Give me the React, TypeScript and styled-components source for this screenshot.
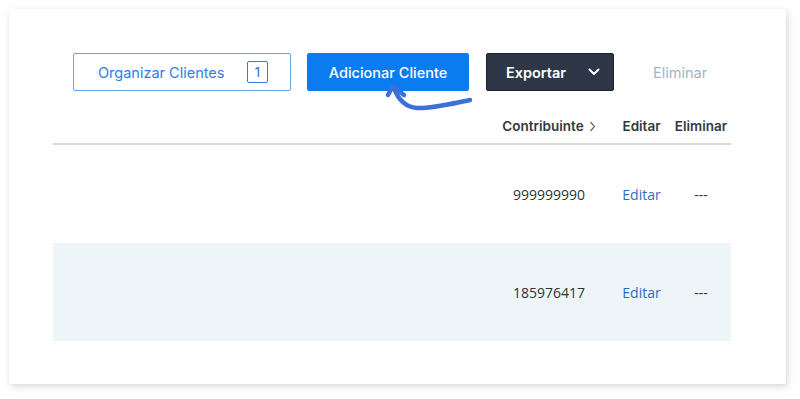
import React from "react";
import styled, { createGlobalStyle } from "styled-components";

const Global = createGlobalStyle`
  html, body { margin: 0; padding: 0; background: #ffffff; }
  body { font-family: "Inter", "Noto Sans", sans-serif; }
  * { box-sizing: border-box; }
`;

const Page = styled.div`
  padding: 9px 14px 15px 9px;
  width: 800px;
  height: 399px;
`;

const Card = styled.div`
  position: relative;
  width: 777px;
  height: 375px;
  background: #ffffff;
  box-shadow: 2px 3px 7px rgba(40, 50, 80, 0.16), 0 0 3px rgba(0, 0, 0, 0.05);
  padding: 44px 55px 0 44px;
`;

const Toolbar = styled.div`
  display: flex;
  align-items: center;
  margin-left: 20px;
  gap: 16px;
  height: 38px;
`;

const OutlineButton = styled.button`
  display: flex;
  align-items: center;
  justify-content: space-between;
  width: 218px;
  height: 38px;
  padding: 0 22px 0 24px;
  background: #fff;
  border: 1px solid #5aa9f2;
  border-radius: 2px;
  color: #2f7de1;
  font-family: "Inter", sans-serif;
  font-size: 14.5px;
  font-weight: 400;
`;

const Badge = styled.span`
  display: inline-flex;
  align-items: center;
  justify-content: center;
  width: 21px;
  height: 22px;
  border: 1.5px solid #2f7de1;
  border-radius: 2px;
  font-size: 13px;
  color: #2f6fc0;
`;

const SolidButton = styled.button<{ $bg: string; $w: number; $dark?: boolean }>`
  display: flex;
  align-items: center;
  justify-content: center;
  gap: 22px;
  width: ${(p) => p.$w}px;
  height: 38px;
  margin-left: ${(p) => (p.$dark ? 1 : 0)}px;
  background: ${(p) => p.$bg};
  border: 1px solid ${(p) => (p.$dark ? "#1c2231" : p.$bg)};
  border-radius: 2px;
  color: #fff;
  font-family: "Inter", sans-serif;
  font-size: 14.5px;
  font-weight: ${(p) => (p.$dark ? 600 : 500)};
  padding: ${(p) => (p.$dark ? "0 0 0 6px" : "0")};
`;

const GhostButton = styled.button`
  background: none;
  border: none;
  color: #a3b3c8;
  font-family: "Inter", sans-serif;
  font-size: 14.5px;
  margin-left: 23px;
  padding: 0;
`;

const Table = styled.div`
  margin-top: 18px;
  width: 678px;
`;

const Row = styled.div<{ $head?: boolean; $alt?: boolean }>`
  display: grid;
  grid-template-columns: 1fr 126px 59px 60px;
  align-items: center;
  height: ${(p) => (p.$head ? "36px" : "98px")};
  background: ${(p) => (p.$alt ? "#edf5f8" : "transparent")};
  border-bottom: ${(p) => (p.$head ? "2px solid #dcdcdc" : "none")};
`;

const HeadCell = styled.div`
  display: flex;
  align-items: center;
  justify-content: center;
  gap: 5px;
  font-family: "Inter", sans-serif;
  font-weight: 600;
  font-size: 13.5px;
  color: #333840;
`;

const Cell = styled.div<{ $link?: boolean }>`
  text-align: center;
  font-family: "Open Sans", sans-serif;
  font-size: 14px;
  color: ${(p) => (p.$link ? "#2f6bc0" : "#333")};
`;

const Arrow = styled.svg`
  position: absolute;
  left: 376px;
  top: 74px;
  overflow: visible;
`;

const rows = [
  { id: "999999990", alt: false },
  { id: "185976417", alt: true },
];

export default function App() {
  return (
    <>
      <Global />
      <Page>
        <Card>
          <Toolbar>
            <OutlineButton>
              Organizar Clientes
              <Badge>1</Badge>
            </OutlineButton>
            <SolidButton $bg="#0a7cf0" $w={162}>
              Adicionar Cliente
            </SolidButton>
            <SolidButton $bg="#2d3748" $w={128} $dark>
              Exportar
              <svg width="12" height="8" viewBox="0 0 12 8">
                <path d="M1.5 1.5 L6 6 L10.5 1.5" fill="none" stroke="#fff" strokeWidth="2" strokeLinecap="round" strokeLinejoin="round" />
              </svg>
            </SolidButton>
            <GhostButton>Eliminar</GhostButton>
          </Toolbar>
          <Table>
            <Row $head>
              <div />
              <HeadCell>
                Contribuinte
                <svg width="7" height="11" viewBox="0 0 7 11">
                  <path d="M1.5 1 L5.5 5.5 L1.5 10" fill="none" stroke="#666" strokeWidth="1.2" />
                </svg>
              </HeadCell>
              <HeadCell>Editar</HeadCell>
              <HeadCell>Eliminar</HeadCell>
            </Row>
            {rows.map((r) => (
              <Row key={r.id} $alt={r.alt}>
                <div />
                <Cell>{r.id}</Cell>
                <Cell $link>Editar</Cell>
                <Cell>---</Cell>
              </Row>
            ))}
          </Table>
          <Arrow width="100" height="40" viewBox="0 0 100 40">
            <path
              d="M85 17 C65 21 45 26 32 25 C20 24 13 16 9 5"
              fill="none"
              stroke="#3b6fd9"
              strokeWidth="4.5"
              strokeLinecap="round"
            />
            <path
              d="M3 12 L8 3 L19 12"
              fill="none"
              stroke="#3b6fd9"
              strokeWidth="4.5"
              strokeLinecap="round"
              strokeLinejoin="round"
            />
          </Arrow>
        </Card>
      </Page>
    </>
  );
}
